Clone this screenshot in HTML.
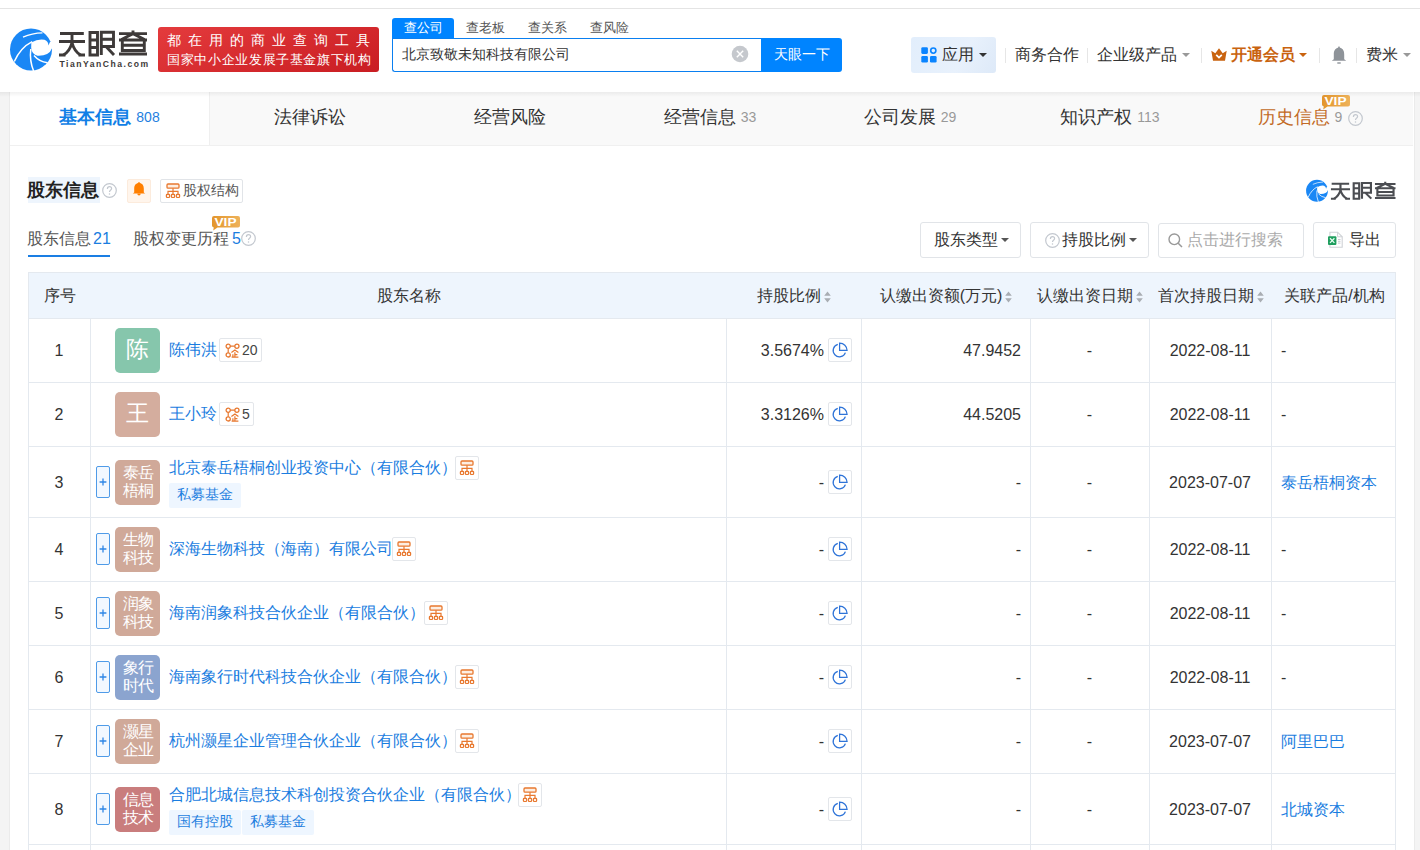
<!DOCTYPE html>
<html><head><meta charset="utf-8"><style>
*{margin:0;padding:0;box-sizing:border-box}
html,body{width:1420px;height:850px;overflow:hidden}
body{background:#f4f4f4;font-family:"Liberation Sans",sans-serif;color:#333;position:relative}
.abs{position:absolute}
.nw{white-space:nowrap}
#top{position:absolute;left:0;top:0;width:1420px;height:92px;background:#fff}
#topline{position:absolute;left:0;top:8px;width:1420px;height:1px;background:#e4e4e4}
#hdrshadow{position:absolute;left:0;top:92px;width:1420px;height:5px;background:linear-gradient(rgba(0,0,0,0.055),rgba(0,0,0,0))}
.banner{left:158px;top:27px;width:221px;height:45px;border-radius:3px;background:linear-gradient(160deg,#e43b3d,#c91d22);color:#fff}
.stab{top:18px;height:20px;font-size:13px;line-height:20px;color:#555;text-align:center}
.stab.on{background:#0084ff;color:#fff;border-radius:3px 3px 0 0}
.sinput{left:392px;top:38px;width:370px;height:34px;border:1px solid #0a7ff0;border-right:none;border-radius:0 0 0 3px;background:#fff}
.sbtn{left:761px;top:38px;width:81px;height:34px;background:#0084ff;border-radius:0 3px 3px 0;color:#fff;font-size:13.5px;line-height:34px;text-align:center}
.nav{top:44px;font-size:16px;line-height:22px;color:#333}
.sep{top:48px;width:1px;height:15px;background:#e6e6e6}
.caret{position:absolute;width:0;height:0;border-left:4px solid transparent;border-right:4px solid transparent;border-top:4px solid #999}
#card{position:absolute;left:10px;top:92px;width:1404px;height:758px;background:#fff}
#tabs{position:absolute;left:0;top:0;width:1403px;height:54px;background:#f9f9f9;border-bottom:1px solid #f0f0f0}
.tab{position:absolute;top:0;height:53px;width:200px;text-align:center;font-size:18px;line-height:51px;color:#333;white-space:nowrap}
.tab .n{font-size:14px;color:#999;margin-left:5px;position:relative;top:-1px}
.tab.on{background:#fff;color:#127fe6;font-weight:bold}
.tab.on .n{color:#1f7fe0;font-weight:normal}
.btn{position:absolute;border:1px solid #e1e4e8;border-radius:3px;background:#fff}
.tl{position:absolute;background:#e4e9ef}
.cell{position:absolute;font-size:16px;line-height:20px;color:#333;white-space:nowrap}
.av{position:absolute;left:115px;width:45px;height:45px;border-radius:5px;color:#fff;text-align:center}
.av1{font-size:23px;line-height:43px;font-weight:500}
.av2{font-size:16px;line-height:18px;padding-top:4px;letter-spacing:-1px;font-weight:500}
.plus{position:absolute;left:96px;width:14px;height:32px;border:1px solid #4f9be8;border-radius:2px;background:#f2f8ff}


.lnk{color:#1a7de0}
.ibox{position:absolute;width:24px;height:24px;border:1px solid #e3e6ea;border-radius:2px;background:#fff}
.tag{position:absolute;height:25px;background:#eef6ff;border-radius:2px;color:#1f7fe0;font-size:14px;line-height:23px;padding:0 8px;white-space:nowrap}
</style></head><body>
<div id="top"></div><div id="topline"></div>
<svg class="abs" style="left:6px;top:25px" width="50" height="50" viewBox="0 0 50 50">
<circle cx="25" cy="24.5" r="21" fill="#1a87f5"/>
<path d="M25.3 16.2 Q34 12.6 40 17 Q42.6 19.3 42.2 21.6 L46.5 23 L46.5 19 L40 13 L30 11 Z" fill="#fff" opacity="0"/>
<path d="M25.3 17.6 Q32 13.6 38.5 14.8 Q42.6 16.5 42.4 20.6 L44 17 L48 17 L48 23.6 L45.9 23.6 Q43 31.2 31.5 30.8 Q26 29.6 25.2 23 Z" fill="#fff"/>
<path d="M17 12.2 Q26 8 36.5 7.8" fill="none" stroke="#fff" stroke-width="1.3"/>
<path d="M26.2 16.6 Q14.5 22.5 8.3 36.5" fill="none" stroke="#fff" stroke-width="1.5"/>
<path d="M24.8 24 Q23.3 36 27.8 46.5" fill="none" stroke="#fff" stroke-width="1.5"/>
<path d="M28 30.5 Q33 36.5 41.5 37.8" fill="none" stroke="#fff" stroke-width="1.5"/>
</svg>
<svg class="abs" style="left:55px;top:25px" width="100" height="47" viewBox="0 0 100 47">
<g fill="none" stroke="#3e3a39" stroke-width="2.9" stroke-linecap="butt" stroke-linejoin="miter">
<path d="M5 8.5H28.8M4 16.5H30M17 8.5V17.5 Q15 26 8.5 30 M17 17.5 Q19 26 25.5 30"/>
<path d="M4 30H10.5 M23.5 30H30"/>
<path d="M35 7.5H42.5V30H35Z M35 15H42.5 M35 22.5H42.5"/>
<path d="M46.3 30V7.3H58.5V21.5H46.3 M46.3 14.2H58.5 M51 21.5 L59 30"/>
<path d="M64 8.6H92 M78 5.5V8.6 M64 15H92 M78 8.6 L66.5 14.5 M78 8.6 L89.5 14.5"/>
<path d="M67.3 15V25.5H89.3V15 M67.3 20.3H89.3 M64 29H92"/>
</g>
</svg>
<div class="abs nw" style="left:59.5px;top:57.5px;font-size:8.6px;font-weight:bold;color:#3e3a39;line-height:12px;letter-spacing:1.5px">TianYanCha.com</div>
<div class="abs banner"><div class="abs nw" style="left:9px;top:5px;font-size:13.5px;line-height:17px;letter-spacing:7.0px;font-weight:500">都在用的商业查询工具</div><div class="abs nw" style="left:9px;top:24px;font-size:13px;line-height:17px;letter-spacing:0.65px;font-weight:500">国家中小企业发展子基金旗下机构</div></div>
<div class="abs stab on" style="left:392px;width:62px">查公司</div>
<div class="abs stab" style="left:454px;width:62px">查老板</div>
<div class="abs stab" style="left:516px;width:62px">查关系</div>
<div class="abs stab" style="left:578px;width:62px">查风险</div>
<div class="abs sinput"><div class="abs nw" style="left:9px;top:6px;font-size:13.6px;line-height:20px;color:#333">北京致敬未知科技有限公司</div></div>
<svg class="abs" style="left:731px;top:45px" width="18" height="18" viewBox="0 0 18 18"><circle cx="9" cy="9" r="8.3" fill="#c5c8cd"/><path d="M5.8 5.8L12.2 12.2M12.2 5.8L5.8 12.2" stroke="#fff" stroke-width="1.4"/></svg>
<div class="abs sbtn">天眼一下</div>
<div class="abs" style="left:911px;top:37px;width:85px;height:36px;background:linear-gradient(120deg,#e2eefc,#e8f1fc 60%,#dde9f8);border-radius:3px"></div>
<svg class="abs" style="left:921px;top:47px" width="16" height="16" viewBox="0 0 16 16"><rect x="0.3" y="0.3" width="6.6" height="6.6" rx="1.3" fill="#0a84ff"/><circle cx="12.3" cy="3.6" r="2.6" fill="none" stroke="#0a84ff" stroke-width="1.6"/><rect x="0.3" y="9" width="6.6" height="6.6" rx="1.3" fill="#0a84ff"/><rect x="9" y="9" width="6.6" height="6.6" rx="1.3" fill="#0a84ff"/></svg>
<div class="abs nav nw" style="left:942px">应用</div>
<div class="caret" style="left:979px;top:53px;border-top-color:#333"></div>
<div class="abs sep" style="left:1005px"></div>
<div class="abs nav nw" style="left:1015px">商务合作</div>
<div class="abs sep" style="left:1087px"></div>
<div class="abs nav nw" style="left:1097px">企业级产品</div>
<div class="caret" style="left:1182px;top:53px"></div>
<div class="abs sep" style="left:1201px"></div>
<svg class="abs" style="left:1211px;top:48px" width="16" height="13" viewBox="0 0 16 13"><path d="M0.3 2.8 L4.3 5.2 L8 0.3 L11.7 5.2 L15.7 2.8 L14 12.7 L2 12.7 Z" fill="#c9630f"/><path d="M5.2 6.8 L8 9.6 L10.8 6.8" fill="none" stroke="#fff" stroke-width="1.7"/></svg>
<div class="abs nav nw" style="left:1231px;color:#c9630f;font-weight:bold">开通会员</div>
<div class="caret" style="left:1299px;top:53px;border-top-color:#c9630f"></div>
<div class="abs sep" style="left:1319px"></div>
<svg class="abs" style="left:1331px;top:46px" width="16" height="19" viewBox="0 0 16 19"><path d="M8 0.6 C8.7 0.6 8.9 1.1 8.9 1.7 C12.2 2.4 13.2 5.2 13.2 8.3 L13.2 13.2 L15.2 14.8 L0.8 14.8 L2.8 13.2 L2.8 8.3 C2.8 5.2 3.8 2.4 7.1 1.7 C7.1 1.1 7.3 0.6 8 0.6Z" fill="#8e9399"/><rect x="6.3" y="16.3" width="3.4" height="1.4" fill="#8e9399"/></svg>
<div class="abs sep" style="left:1356px"></div>
<div class="abs nav nw" style="left:1366px">费米</div>
<div class="caret" style="left:1403px;top:53px"></div>
<div id="card"><div id="tabs">
<div class="tab on" style="left:0;width:199px">基本信息<span class="n">808</span></div>
<div class="tab" style="left:199px;border-left:1px solid #efefef">法律诉讼</div>
<div class="tab" style="left:400px">经营风险</div>
<div class="tab" style="left:600px">经营信息<span class="n">33</span></div>
<div class="tab" style="left:800px">公司发展<span class="n">29</span></div>
<div class="tab" style="left:1000px">知识产权<span class="n">113</span></div>
<div class="tab" style="left:1200px;color:#c26a26">历史信息<span class="n">9</span><span style="display:inline-block;width:20px"></span></div>
</div></div>
<svg class="abs" style="left:1348px;top:111px" width="15" height="15" viewBox="0 0 15 15"><circle cx="7.5" cy="7.5" r="6.8" fill="none" stroke="#c3c8cf" stroke-width="1.2"/><path d="M5.4 5.9 Q5.4 3.7 7.5 3.7 Q9.6 3.7 9.6 5.6 Q9.6 6.7 8.3 7.4 Q7.5 7.9 7.5 9" fill="none" stroke="#c3c8cf" stroke-width="1.2"/><circle cx="7.5" cy="11" r="0.75" fill="#c3c8cf"/></svg>
<svg class="abs" style="left:1322px;top:95px" width="28" height="15" viewBox="0 0 28 15"><defs><linearGradient id="vg1322" x1="0" y1="0" x2="1" y2="0"><stop offset="0" stop-color="#e3952c"/><stop offset="1" stop-color="#eeb25a"/></linearGradient></defs><path d="M2 0H26Q28 0 28 2V9.5Q28 11.5 26 11.5H5.5L1.2 14.5L1.8 11.4Q0 11.2 0 9.5V2Q0 0 2 0Z" fill="url(#vg1322)"/><text x="2.5" y="9.6" font-family="Liberation Sans" font-weight="bold" font-size="11" fill="#fff" textLength="22" lengthAdjust="spacingAndGlyphs">VIP</text></svg>
<div class="abs" style="left:9px;top:92px;width:1px;height:758px;background:#ebebeb"></div><div class="abs" style="left:1414px;top:92px;width:1px;height:758px;background:#ebebeb"></div>
<div id="hdrshadow"></div>
<div class="abs" style="left:28px;top:177px;width:72px;height:26px;background:#eef5fd"></div>
<div class="abs nw" style="left:27px;top:177px;font-size:18px;line-height:26px;font-weight:bold;color:#222">股东信息</div>
<svg class="abs" style="left:102px;top:183px" width="15" height="15" viewBox="0 0 15 15"><circle cx="7.5" cy="7.5" r="6.8" fill="none" stroke="#c3c8cf" stroke-width="1.2"/><path d="M5.4 5.9 Q5.4 3.7 7.5 3.7 Q9.6 3.7 9.6 5.6 Q9.6 6.7 8.3 7.4 Q7.5 7.9 7.5 9" fill="none" stroke="#c3c8cf" stroke-width="1.2"/><circle cx="7.5" cy="11" r="0.75" fill="#c3c8cf"/></svg>
<div class="abs" style="left:127px;top:179px;width:24px;height:24px;background:#fff5ec;border:1px solid #fcebdc;border-radius:2px"></div>
<svg class="abs" style="left:132px;top:182px" width="14" height="15" viewBox="0 0 14 15"><path d="M7 1 C10.2 1 11.8 3.4 11.8 6.6 L11.8 10.5 L13.2 11.5 L0.8 11.5 L2.2 10.5 L2.2 6.6 C2.2 3.4 3.8 1 7 1Z" fill="#ff7f00"/><circle cx="7" cy="0.9" r="0.8" fill="#ff7f00"/><path d="M5.3 11.5 Q5.3 13.6 7 13.6 Q8.7 13.6 8.7 11.5Z" fill="#ff7f00"/></svg>
<div class="abs" style="left:160px;top:179px;width:83px;height:24px;border:1px solid #e1e4e8;border-radius:2px"></div>
<svg class="abs" style="left:161px;top:179px" width="24.0" height="24.0" viewBox="0 0 24 24"><rect x="6" y="5" width="12" height="4.2" rx="1" fill="#fdeee2" stroke="#e8782f" stroke-width="1.3"/><path d="M12 9.2V15.3M7 15.3V12.3H17V15.3" fill="none" stroke="#e8782f" stroke-width="1.2"/><rect x="5.4" y="15.3" width="3.2" height="3.2" rx="0.8" fill="#fdeee2" stroke="#e8782f" stroke-width="1.2"/><rect x="10.4" y="15.3" width="3.2" height="3.2" rx="0.8" fill="#fdeee2" stroke="#e8782f" stroke-width="1.2"/><rect x="15.4" y="15.3" width="3.2" height="3.2" rx="0.8" fill="#fdeee2" stroke="#e8782f" stroke-width="1.2"/></svg>
<div class="abs nw" style="left:183px;top:180px;font-size:14px;line-height:20px;color:#555">股权结构</div>
<svg class="abs" style="left:1304px;top:178px" width="26" height="26" viewBox="0 0 50 50">
<circle cx="25" cy="24.5" r="21" fill="#1a87f5"/>
<path d="M25.3 16.2 Q34 12.6 40 17 Q42.6 19.3 42.2 21.6 L46.5 23 L46.5 19 L40 13 L30 11 Z" fill="#fff" opacity="0"/>
<path d="M25.3 17.6 Q32 13.6 38.5 14.8 Q42.6 16.5 42.4 20.6 L44 17 L48 17 L48 23.6 L45.9 23.6 Q43 31.2 31.5 30.8 Q26 29.6 25.2 23 Z" fill="#fff"/>
<path d="M17 12.2 Q26 8 36.5 7.8" fill="none" stroke="#fff" stroke-width="1.3"/>
<path d="M26.2 16.6 Q14.5 22.5 8.3 36.5" fill="none" stroke="#fff" stroke-width="1.5"/>
<path d="M24.8 24 Q23.3 36 27.8 46.5" fill="none" stroke="#fff" stroke-width="1.5"/>
<path d="M28 30.5 Q33 36.5 41.5 37.8" fill="none" stroke="#fff" stroke-width="1.5"/>
</svg>
<svg class="abs" style="left:1329px;top:180px" width="68" height="22" viewBox="64 0 100 47" preserveAspectRatio="none">
</svg>
<svg class="abs" style="left:1328px;top:178.2px" width="73.4" height="24.6" viewBox="0 0 100 35.7" preserveAspectRatio="none">
<g fill="none" stroke="#4b4d52" stroke-width="2.9">
<path d="M5 8.5H28.8M4 16.5H30M17 8.5V17.5 Q15 26 8.5 30 M17 17.5 Q19 26 25.5 30"/>
<path d="M4 30H10.5 M23.5 30H30"/>
<path d="M35 7.5H42.5V30H35Z M35 15H42.5 M35 22.5H42.5"/>
<path d="M46.3 30V7.3H58.5V21.5H46.3 M46.3 14.2H58.5 M51 21.5 L59 30"/>
<path d="M64 8.6H92 M78 5.5V8.6 M64 15H92 M78 8.6 L66.5 14.5 M78 8.6 L89.5 14.5"/>
<path d="M67.3 15V25.5H89.3V15 M67.3 20.3H89.3 M64 29H92"/>
</g></svg>
<div class="abs nw" style="left:27px;top:229px;font-size:16px;line-height:20px;color:#555">股东信息<span style="color:#1a7de0;margin-left:2px">21</span></div>
<div class="abs" style="left:28px;top:255px;width:82px;height:2px;background:#1a7ee3"></div>
<div class="abs nw" style="left:133px;top:229px;font-size:16px;line-height:20px;color:#555">股权变更历程<span style="color:#1a7de0;margin-left:3px">5</span></div>
<svg class="abs" style="left:241px;top:231px" width="15" height="15" viewBox="0 0 15 15"><circle cx="7.5" cy="7.5" r="6.8" fill="none" stroke="#c3c8cf" stroke-width="1.2"/><path d="M5.4 5.9 Q5.4 3.7 7.5 3.7 Q9.6 3.7 9.6 5.6 Q9.6 6.7 8.3 7.4 Q7.5 7.9 7.5 9" fill="none" stroke="#c3c8cf" stroke-width="1.2"/><circle cx="7.5" cy="11" r="0.75" fill="#c3c8cf"/></svg>
<svg class="abs" style="left:212px;top:216px" width="28" height="15" viewBox="0 0 28 15"><defs><linearGradient id="vg212" x1="0" y1="0" x2="1" y2="0"><stop offset="0" stop-color="#e3952c"/><stop offset="1" stop-color="#eeb25a"/></linearGradient></defs><path d="M2 0H26Q28 0 28 2V9.5Q28 11.5 26 11.5H5.5L1.2 14.5L1.8 11.4Q0 11.2 0 9.5V2Q0 0 2 0Z" fill="url(#vg212)"/><text x="2.5" y="9.6" font-family="Liberation Sans" font-weight="bold" font-size="11" fill="#fff" textLength="22" lengthAdjust="spacingAndGlyphs">VIP</text></svg>
<div class="btn" style="left:920px;top:222px;width:101px;height:36px"></div>
<div class="abs nw" style="left:934px;top:229px;font-size:16px;line-height:22px;color:#333">股东类型</div>
<div class="caret" style="left:1001px;top:238px;border-top-color:#555"></div>
<div class="btn" style="left:1030px;top:222px;width:119px;height:36px"></div>
<svg class="abs" style="left:1045px;top:233px" width="15" height="15" viewBox="0 0 15 15"><circle cx="7.5" cy="7.5" r="6.8" fill="none" stroke="#c3c8cf" stroke-width="1.2"/><path d="M5.4 5.9 Q5.4 3.7 7.5 3.7 Q9.6 3.7 9.6 5.6 Q9.6 6.7 8.3 7.4 Q7.5 7.9 7.5 9" fill="none" stroke="#c3c8cf" stroke-width="1.2"/><circle cx="7.5" cy="11" r="0.75" fill="#c3c8cf"/></svg>
<div class="abs nw" style="left:1062px;top:229px;font-size:16px;line-height:22px;color:#333">持股比例</div>
<div class="caret" style="left:1129px;top:238px;border-top-color:#555"></div>
<div class="btn" style="left:1158px;top:223px;width:146px;height:35px"></div>
<svg class="abs" style="left:1168px;top:233px" width="15" height="15" viewBox="0 0 15 15"><circle cx="6.3" cy="6.3" r="5.3" fill="none" stroke="#999" stroke-width="1.4"/><path d="M10.2 10.2L14 14" stroke="#999" stroke-width="1.5"/></svg>
<div class="abs nw" style="left:1187px;top:229px;font-size:16px;line-height:22px;color:#aaa">点击进行搜索</div>
<div class="btn" style="left:1313px;top:222px;width:83px;height:36px"></div>
<svg class="abs" style="left:1327px;top:231px" width="17" height="17" viewBox="0 0 17 17"><path d="M2.9 1.2H10.6L15.2 5.8V16.3H2.9Z" fill="#fff" stroke="#cfd2d6" stroke-width="1.1"/><path d="M10.6 1.2V5.8H15.2" fill="none" stroke="#cfd2d6" stroke-width="1"/><rect x="1" y="5.3" width="8.4" height="8.6" rx="1" fill="#1f9e5e"/><path d="M3 7.3L7.4 11.9M7.4 7.3L3 11.9" stroke="#e6fff0" stroke-width="1.3"/><path d="M11 8.5H13.5M11 10.3H13.5M11 12.1H13.5" stroke="#c8cbd0" stroke-width="1"/></svg>
<div class="abs nw" style="left:1349px;top:229px;font-size:16px;line-height:22px;color:#333">导出</div>
<div class="abs" style="left:28px;top:272px;width:1368px;height:46px;background:#eef5fd"></div>
<div class="tl" style="left:28px;top:272px;width:1368px;height:1px"></div>
<div class="tl" style="left:28px;top:318px;width:1368px;height:1px"></div>
<div class="tl" style="left:28px;top:382px;width:1368px;height:1px"></div>
<div class="tl" style="left:28px;top:446px;width:1368px;height:1px"></div>
<div class="tl" style="left:28px;top:517px;width:1368px;height:1px"></div>
<div class="tl" style="left:28px;top:581px;width:1368px;height:1px"></div>
<div class="tl" style="left:28px;top:645px;width:1368px;height:1px"></div>
<div class="tl" style="left:28px;top:709px;width:1368px;height:1px"></div>
<div class="tl" style="left:28px;top:773px;width:1368px;height:1px"></div>
<div class="tl" style="left:28px;top:844px;width:1368px;height:1px"></div>
<div class="tl" style="left:28px;top:272px;width:1px;height:578px"></div>
<div class="tl" style="left:1395px;top:272px;width:1px;height:578px"></div>
<div class="tl" style="left:90px;top:318px;width:1px;height:532px"></div>
<div class="tl" style="left:726px;top:318px;width:1px;height:532px"></div>
<div class="tl" style="left:861px;top:318px;width:1px;height:532px"></div>
<div class="tl" style="left:1030px;top:318px;width:1px;height:532px"></div>
<div class="tl" style="left:1149px;top:318px;width:1px;height:532px"></div>
<div class="tl" style="left:1271px;top:318px;width:1px;height:532px"></div>
<div class="cell" style="left:29px;top:286px;width:62px;text-align:center">序号</div>
<div class="cell" style="left:91px;top:286px;width:636px;text-align:center">股东名称</div>
<div class="cell" style="left:727px;top:286px;width:135px;text-align:center"><span style="padding-right:11px">持股比例</span></div>
<div class="cell" style="left:862px;top:286px;width:169px;text-align:center"><span style="padding-right:11px">认缴出资额(万元)</span></div>
<div class="cell" style="left:1031px;top:286px;width:119px;text-align:center"><span style="padding-right:11px">认缴出资日期</span></div>
<div class="cell" style="left:1150px;top:286px;width:122px;text-align:center"><span style="padding-right:11px">首次持股日期</span></div>
<div class="cell" style="left:1272px;top:286px;width:125px;text-align:center">关联产品/机构</div>
<svg class="abs" style="left:824px;top:291px" width="7" height="12" viewBox="0 0 7 12"><path d="M3.5 0.5L6.8 4.8H0.2Z M3.5 11.5L6.8 7.2H0.2Z" fill="#a9adb3"/></svg>
<svg class="abs" style="left:1005px;top:291px" width="7" height="12" viewBox="0 0 7 12"><path d="M3.5 0.5L6.8 4.8H0.2Z M3.5 11.5L6.8 7.2H0.2Z" fill="#a9adb3"/></svg>
<svg class="abs" style="left:1136px;top:291px" width="7" height="12" viewBox="0 0 7 12"><path d="M3.5 0.5L6.8 4.8H0.2Z M3.5 11.5L6.8 7.2H0.2Z" fill="#a9adb3"/></svg>
<svg class="abs" style="left:1257px;top:291px" width="7" height="12" viewBox="0 0 7 12"><path d="M3.5 0.5L6.8 4.8H0.2Z M3.5 11.5L6.8 7.2H0.2Z" fill="#a9adb3"/></svg>
<div class="cell" style="left:28px;top:341px;width:62px;text-align:center">1</div>
<div class="av av1" style="top:328px;background:#86c6ac">陈</div>
<div class="cell lnk" style="left:169px;top:340px">陈伟洪</div>
<div class="ibox" style="left:219px;top:338px;width:43px"></div>
<svg class="abs" style="left:225px;top:343px" width="15" height="15" viewBox="0 0 15 15"><circle cx="3.2" cy="3.2" r="2.1" fill="none" stroke="#e8782f" stroke-width="1.3"/><circle cx="11.9" cy="3.2" r="2.1" fill="none" stroke="#e8782f" stroke-width="1.3"/><circle cx="3.2" cy="11.9" r="2.1" fill="none" stroke="#e8782f" stroke-width="1.3"/><path d="M5.3 3.2H9.8M3.2 5.3V9.8" stroke="#e8782f" stroke-width="1.2"/><path d="M6.4 9.6L9.9 6.9L13.4 9.6M9.9 9.2V14.2M7.9 11.2V14.2M9.9 11.6H12.4M6.6 14.2H13.4" fill="none" stroke="#e8782f" stroke-width="1.2"/></svg>
<div class="abs nw" style="left:242px;top:340px;font-size:14px;line-height:20px;color:#444">20</div>
<div class="cell" style="left:726px;top:341px;width:98px;text-align:right">3.5674%</div>
<div class="ibox" style="left:828px;top:338px"></div><svg class="abs" style="left:828px;top:338px" width="24" height="24" viewBox="0 0 24 24"><path d="M9.8 6.4 A6.3 6.3 0 1 0 17.4 14.6" fill="none" stroke="#2f74d8" stroke-width="1.25"/><path d="M11.6 5.1 V12.4 H19.1 A7.4 7.4 0 0 0 11.6 5.1 Z" fill="none" stroke="#2f74d8" stroke-width="1.25"/></svg>
<div class="cell" style="left:861px;top:341px;width:160px;text-align:right">47.9452</div>
<div class="cell" style="left:1030px;top:341px;width:119px;text-align:center">-</div>
<div class="cell" style="left:1149px;top:341px;width:122px;text-align:center">2022-08-11</div>
<div class="cell" style="left:1281px;top:341px">-</div>
<div class="cell" style="left:28px;top:405px;width:62px;text-align:center">2</div>
<div class="av av1" style="top:392px;background:#d4ad9e">王</div>
<div class="cell lnk" style="left:169px;top:404px">王小玲</div>
<div class="ibox" style="left:219px;top:402px;width:35px"></div>
<svg class="abs" style="left:225px;top:407px" width="15" height="15" viewBox="0 0 15 15"><circle cx="3.2" cy="3.2" r="2.1" fill="none" stroke="#e8782f" stroke-width="1.3"/><circle cx="11.9" cy="3.2" r="2.1" fill="none" stroke="#e8782f" stroke-width="1.3"/><circle cx="3.2" cy="11.9" r="2.1" fill="none" stroke="#e8782f" stroke-width="1.3"/><path d="M5.3 3.2H9.8M3.2 5.3V9.8" stroke="#e8782f" stroke-width="1.2"/><path d="M6.4 9.6L9.9 6.9L13.4 9.6M9.9 9.2V14.2M7.9 11.2V14.2M9.9 11.6H12.4M6.6 14.2H13.4" fill="none" stroke="#e8782f" stroke-width="1.2"/></svg>
<div class="abs nw" style="left:242px;top:404px;font-size:14px;line-height:20px;color:#444">5</div>
<div class="cell" style="left:726px;top:405px;width:98px;text-align:right">3.3126%</div>
<div class="ibox" style="left:828px;top:402px"></div><svg class="abs" style="left:828px;top:402px" width="24" height="24" viewBox="0 0 24 24"><path d="M9.8 6.4 A6.3 6.3 0 1 0 17.4 14.6" fill="none" stroke="#2f74d8" stroke-width="1.25"/><path d="M11.6 5.1 V12.4 H19.1 A7.4 7.4 0 0 0 11.6 5.1 Z" fill="none" stroke="#2f74d8" stroke-width="1.25"/></svg>
<div class="cell" style="left:861px;top:405px;width:160px;text-align:right">44.5205</div>
<div class="cell" style="left:1030px;top:405px;width:119px;text-align:center">-</div>
<div class="cell" style="left:1149px;top:405px;width:122px;text-align:center">2022-08-11</div>
<div class="cell" style="left:1281px;top:405px">-</div>
<div class="cell" style="left:28px;top:473px;width:62px;text-align:center">3</div>
<div class="plus" style="top:466px"><svg class="abs" style="left:0;top:0" width="12" height="30" viewBox="0 0 12 30"><path d="M2.6 15H9.4M6 11.6V18.4" stroke="#2f86e6" stroke-width="1.3"/></svg></div>
<div class="av av2" style="top:460px;background:#d0a999">泰岳<br>梧桐</div>
<div class="cell lnk" style="left:169px;top:458px">北京泰岳梧桐创业投资中心（有限合伙）</div>
<div class="ibox" style="left:455px;top:456px"></div>
<svg class="abs" style="left:455px;top:456px" width="24.0" height="24.0" viewBox="0 0 24 24"><rect x="6" y="5" width="12" height="4.2" rx="1" fill="#fdeee2" stroke="#e8782f" stroke-width="1.3"/><path d="M12 9.2V15.3M7 15.3V12.3H17V15.3" fill="none" stroke="#e8782f" stroke-width="1.2"/><rect x="5.4" y="15.3" width="3.2" height="3.2" rx="0.8" fill="#fdeee2" stroke="#e8782f" stroke-width="1.2"/><rect x="10.4" y="15.3" width="3.2" height="3.2" rx="0.8" fill="#fdeee2" stroke="#e8782f" stroke-width="1.2"/><rect x="15.4" y="15.3" width="3.2" height="3.2" rx="0.8" fill="#fdeee2" stroke="#e8782f" stroke-width="1.2"/></svg>
<div class="cell" style="left:726px;top:473px;width:98px;text-align:right">-</div>
<div class="ibox" style="left:828px;top:470px"></div><svg class="abs" style="left:828px;top:470px" width="24" height="24" viewBox="0 0 24 24"><path d="M9.8 6.4 A6.3 6.3 0 1 0 17.4 14.6" fill="none" stroke="#2f74d8" stroke-width="1.25"/><path d="M11.6 5.1 V12.4 H19.1 A7.4 7.4 0 0 0 11.6 5.1 Z" fill="none" stroke="#2f74d8" stroke-width="1.25"/></svg>
<div class="cell" style="left:861px;top:473px;width:160px;text-align:right">-</div>
<div class="cell" style="left:1030px;top:473px;width:119px;text-align:center">-</div>
<div class="cell" style="left:1149px;top:473px;width:122px;text-align:center">2023-07-07</div>
<div class="cell lnk" style="left:1281px;top:473px">泰岳梧桐资本</div>
<div class="tag" style="left:169px;top:483px">私募基金</div>
<div class="cell" style="left:28px;top:540px;width:62px;text-align:center">4</div>
<div class="plus" style="top:533px"><svg class="abs" style="left:0;top:0" width="12" height="30" viewBox="0 0 12 30"><path d="M2.6 15H9.4M6 11.6V18.4" stroke="#2f86e6" stroke-width="1.3"/></svg></div>
<div class="av av2" style="top:527px;background:#d0a999">生物<br>科技</div>
<div class="cell lnk" style="left:169px;top:539px">深海生物科技（海南）有限公司</div>
<div class="ibox" style="left:392px;top:537px"></div>
<svg class="abs" style="left:392px;top:537px" width="24.0" height="24.0" viewBox="0 0 24 24"><rect x="6" y="5" width="12" height="4.2" rx="1" fill="#fdeee2" stroke="#e8782f" stroke-width="1.3"/><path d="M12 9.2V15.3M7 15.3V12.3H17V15.3" fill="none" stroke="#e8782f" stroke-width="1.2"/><rect x="5.4" y="15.3" width="3.2" height="3.2" rx="0.8" fill="#fdeee2" stroke="#e8782f" stroke-width="1.2"/><rect x="10.4" y="15.3" width="3.2" height="3.2" rx="0.8" fill="#fdeee2" stroke="#e8782f" stroke-width="1.2"/><rect x="15.4" y="15.3" width="3.2" height="3.2" rx="0.8" fill="#fdeee2" stroke="#e8782f" stroke-width="1.2"/></svg>
<div class="cell" style="left:726px;top:540px;width:98px;text-align:right">-</div>
<div class="ibox" style="left:828px;top:537px"></div><svg class="abs" style="left:828px;top:537px" width="24" height="24" viewBox="0 0 24 24"><path d="M9.8 6.4 A6.3 6.3 0 1 0 17.4 14.6" fill="none" stroke="#2f74d8" stroke-width="1.25"/><path d="M11.6 5.1 V12.4 H19.1 A7.4 7.4 0 0 0 11.6 5.1 Z" fill="none" stroke="#2f74d8" stroke-width="1.25"/></svg>
<div class="cell" style="left:861px;top:540px;width:160px;text-align:right">-</div>
<div class="cell" style="left:1030px;top:540px;width:119px;text-align:center">-</div>
<div class="cell" style="left:1149px;top:540px;width:122px;text-align:center">2022-08-11</div>
<div class="cell" style="left:1281px;top:540px">-</div>
<div class="cell" style="left:28px;top:604px;width:62px;text-align:center">5</div>
<div class="plus" style="top:597px"><svg class="abs" style="left:0;top:0" width="12" height="30" viewBox="0 0 12 30"><path d="M2.6 15H9.4M6 11.6V18.4" stroke="#2f86e6" stroke-width="1.3"/></svg></div>
<div class="av av2" style="top:591px;background:#d0a999">润象<br>科技</div>
<div class="cell lnk" style="left:169px;top:603px">海南润象科技合伙企业（有限合伙）</div>
<div class="ibox" style="left:424px;top:601px"></div>
<svg class="abs" style="left:424px;top:601px" width="24.0" height="24.0" viewBox="0 0 24 24"><rect x="6" y="5" width="12" height="4.2" rx="1" fill="#fdeee2" stroke="#e8782f" stroke-width="1.3"/><path d="M12 9.2V15.3M7 15.3V12.3H17V15.3" fill="none" stroke="#e8782f" stroke-width="1.2"/><rect x="5.4" y="15.3" width="3.2" height="3.2" rx="0.8" fill="#fdeee2" stroke="#e8782f" stroke-width="1.2"/><rect x="10.4" y="15.3" width="3.2" height="3.2" rx="0.8" fill="#fdeee2" stroke="#e8782f" stroke-width="1.2"/><rect x="15.4" y="15.3" width="3.2" height="3.2" rx="0.8" fill="#fdeee2" stroke="#e8782f" stroke-width="1.2"/></svg>
<div class="cell" style="left:726px;top:604px;width:98px;text-align:right">-</div>
<div class="ibox" style="left:828px;top:601px"></div><svg class="abs" style="left:828px;top:601px" width="24" height="24" viewBox="0 0 24 24"><path d="M9.8 6.4 A6.3 6.3 0 1 0 17.4 14.6" fill="none" stroke="#2f74d8" stroke-width="1.25"/><path d="M11.6 5.1 V12.4 H19.1 A7.4 7.4 0 0 0 11.6 5.1 Z" fill="none" stroke="#2f74d8" stroke-width="1.25"/></svg>
<div class="cell" style="left:861px;top:604px;width:160px;text-align:right">-</div>
<div class="cell" style="left:1030px;top:604px;width:119px;text-align:center">-</div>
<div class="cell" style="left:1149px;top:604px;width:122px;text-align:center">2022-08-11</div>
<div class="cell" style="left:1281px;top:604px">-</div>
<div class="cell" style="left:28px;top:668px;width:62px;text-align:center">6</div>
<div class="plus" style="top:661px"><svg class="abs" style="left:0;top:0" width="12" height="30" viewBox="0 0 12 30"><path d="M2.6 15H9.4M6 11.6V18.4" stroke="#2f86e6" stroke-width="1.3"/></svg></div>
<div class="av av2" style="top:655px;background:#8ba4cf">象行<br>时代</div>
<div class="cell lnk" style="left:169px;top:667px">海南象行时代科技合伙企业（有限合伙）</div>
<div class="ibox" style="left:455px;top:665px"></div>
<svg class="abs" style="left:455px;top:665px" width="24.0" height="24.0" viewBox="0 0 24 24"><rect x="6" y="5" width="12" height="4.2" rx="1" fill="#fdeee2" stroke="#e8782f" stroke-width="1.3"/><path d="M12 9.2V15.3M7 15.3V12.3H17V15.3" fill="none" stroke="#e8782f" stroke-width="1.2"/><rect x="5.4" y="15.3" width="3.2" height="3.2" rx="0.8" fill="#fdeee2" stroke="#e8782f" stroke-width="1.2"/><rect x="10.4" y="15.3" width="3.2" height="3.2" rx="0.8" fill="#fdeee2" stroke="#e8782f" stroke-width="1.2"/><rect x="15.4" y="15.3" width="3.2" height="3.2" rx="0.8" fill="#fdeee2" stroke="#e8782f" stroke-width="1.2"/></svg>
<div class="cell" style="left:726px;top:668px;width:98px;text-align:right">-</div>
<div class="ibox" style="left:828px;top:665px"></div><svg class="abs" style="left:828px;top:665px" width="24" height="24" viewBox="0 0 24 24"><path d="M9.8 6.4 A6.3 6.3 0 1 0 17.4 14.6" fill="none" stroke="#2f74d8" stroke-width="1.25"/><path d="M11.6 5.1 V12.4 H19.1 A7.4 7.4 0 0 0 11.6 5.1 Z" fill="none" stroke="#2f74d8" stroke-width="1.25"/></svg>
<div class="cell" style="left:861px;top:668px;width:160px;text-align:right">-</div>
<div class="cell" style="left:1030px;top:668px;width:119px;text-align:center">-</div>
<div class="cell" style="left:1149px;top:668px;width:122px;text-align:center">2022-08-11</div>
<div class="cell" style="left:1281px;top:668px">-</div>
<div class="cell" style="left:28px;top:732px;width:62px;text-align:center">7</div>
<div class="plus" style="top:725px"><svg class="abs" style="left:0;top:0" width="12" height="30" viewBox="0 0 12 30"><path d="M2.6 15H9.4M6 11.6V18.4" stroke="#2f86e6" stroke-width="1.3"/></svg></div>
<div class="av av2" style="top:719px;background:#d0a999">灏星<br>企业</div>
<div class="cell lnk" style="left:169px;top:731px">杭州灏星企业管理合伙企业（有限合伙）</div>
<div class="ibox" style="left:455px;top:729px"></div>
<svg class="abs" style="left:455px;top:729px" width="24.0" height="24.0" viewBox="0 0 24 24"><rect x="6" y="5" width="12" height="4.2" rx="1" fill="#fdeee2" stroke="#e8782f" stroke-width="1.3"/><path d="M12 9.2V15.3M7 15.3V12.3H17V15.3" fill="none" stroke="#e8782f" stroke-width="1.2"/><rect x="5.4" y="15.3" width="3.2" height="3.2" rx="0.8" fill="#fdeee2" stroke="#e8782f" stroke-width="1.2"/><rect x="10.4" y="15.3" width="3.2" height="3.2" rx="0.8" fill="#fdeee2" stroke="#e8782f" stroke-width="1.2"/><rect x="15.4" y="15.3" width="3.2" height="3.2" rx="0.8" fill="#fdeee2" stroke="#e8782f" stroke-width="1.2"/></svg>
<div class="cell" style="left:726px;top:732px;width:98px;text-align:right">-</div>
<div class="ibox" style="left:828px;top:729px"></div><svg class="abs" style="left:828px;top:729px" width="24" height="24" viewBox="0 0 24 24"><path d="M9.8 6.4 A6.3 6.3 0 1 0 17.4 14.6" fill="none" stroke="#2f74d8" stroke-width="1.25"/><path d="M11.6 5.1 V12.4 H19.1 A7.4 7.4 0 0 0 11.6 5.1 Z" fill="none" stroke="#2f74d8" stroke-width="1.25"/></svg>
<div class="cell" style="left:861px;top:732px;width:160px;text-align:right">-</div>
<div class="cell" style="left:1030px;top:732px;width:119px;text-align:center">-</div>
<div class="cell" style="left:1149px;top:732px;width:122px;text-align:center">2023-07-07</div>
<div class="cell lnk" style="left:1281px;top:732px">阿里巴巴</div>
<div class="cell" style="left:28px;top:800px;width:62px;text-align:center">8</div>
<div class="plus" style="top:793px"><svg class="abs" style="left:0;top:0" width="12" height="30" viewBox="0 0 12 30"><path d="M2.6 15H9.4M6 11.6V18.4" stroke="#2f86e6" stroke-width="1.3"/></svg></div>
<div class="av av2" style="top:787px;background:#c97d7d">信息<br>技术</div>
<div class="cell lnk" style="left:169px;top:785px">合肥北城信息技术科创投资合伙企业（有限合伙）</div>
<div class="ibox" style="left:518px;top:783px"></div>
<svg class="abs" style="left:518px;top:783px" width="24.0" height="24.0" viewBox="0 0 24 24"><rect x="6" y="5" width="12" height="4.2" rx="1" fill="#fdeee2" stroke="#e8782f" stroke-width="1.3"/><path d="M12 9.2V15.3M7 15.3V12.3H17V15.3" fill="none" stroke="#e8782f" stroke-width="1.2"/><rect x="5.4" y="15.3" width="3.2" height="3.2" rx="0.8" fill="#fdeee2" stroke="#e8782f" stroke-width="1.2"/><rect x="10.4" y="15.3" width="3.2" height="3.2" rx="0.8" fill="#fdeee2" stroke="#e8782f" stroke-width="1.2"/><rect x="15.4" y="15.3" width="3.2" height="3.2" rx="0.8" fill="#fdeee2" stroke="#e8782f" stroke-width="1.2"/></svg>
<div class="cell" style="left:726px;top:800px;width:98px;text-align:right">-</div>
<div class="ibox" style="left:828px;top:797px"></div><svg class="abs" style="left:828px;top:797px" width="24" height="24" viewBox="0 0 24 24"><path d="M9.8 6.4 A6.3 6.3 0 1 0 17.4 14.6" fill="none" stroke="#2f74d8" stroke-width="1.25"/><path d="M11.6 5.1 V12.4 H19.1 A7.4 7.4 0 0 0 11.6 5.1 Z" fill="none" stroke="#2f74d8" stroke-width="1.25"/></svg>
<div class="cell" style="left:861px;top:800px;width:160px;text-align:right">-</div>
<div class="cell" style="left:1030px;top:800px;width:119px;text-align:center">-</div>
<div class="cell" style="left:1149px;top:800px;width:122px;text-align:center">2023-07-07</div>
<div class="cell lnk" style="left:1281px;top:800px">北城资本</div>
<div class="tag" style="left:169px;top:810px">国有控股</div>
<div class="tag" style="left:242px;top:810px">私募基金</div>
</body></html>
